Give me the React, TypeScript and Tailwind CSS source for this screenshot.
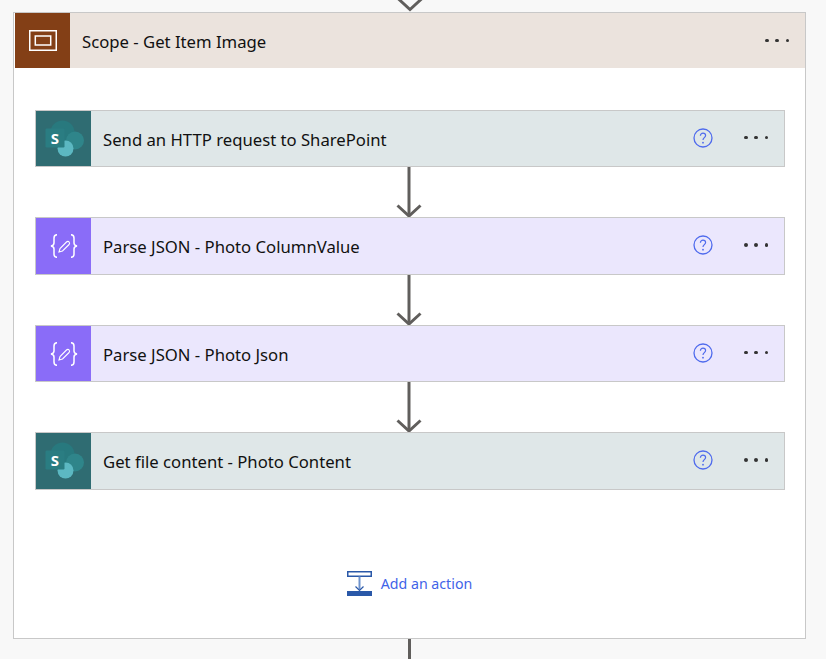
const font = { fontFamily: '"Noto Sans", "Open Sans", sans-serif' };

function Dots() {
  return (
    <div className="flex shrink-0 items-center gap-[6.8px]">
      <span className="h-[3.5px] w-[3.5px] rounded-full bg-[#333]" />
      <span className="h-[3.5px] w-[3.5px] rounded-full bg-[#333]" />
      <span className="h-[3.5px] w-[3.5px] rounded-full bg-[#333]" />
    </div>
  );
}

function Help() {
  return (
    <svg width="20" height="20" viewBox="0 0 20 20" fill="none" className="mb-[2px] shrink-0">
      <circle cx="10" cy="10" r="9" stroke="#4f6bed" strokeWidth="1.3" />
      <path d="M7.400 7.700c0-1.500 1.100-2.500 2.600-2.500s2.600 1 2.600 2.400c0 2-2.600 2.100-2.600 4.300" stroke="#4f6bed" strokeWidth="1.200" />
      <circle cx="10" cy="14.700" r=".9" fill="#4f6bed" />
    </svg>
  );
}

function SharePoint() {
  return (
    <svg width="40" height="40" viewBox="0 0 40 40">
      <circle cx="18.500" cy="13.500" r="12" fill="#28797e" />
      <circle cx="31" cy="21.500" r="9" fill="#2f858a" />
      <circle cx="21.500" cy="29.500" r="8" fill="#5cb8c2" />
      <rect x="1.500" y="9.500" width="19" height="19" rx="1.200" fill="#2a7d82" />
      <text x="11" y="24.500" textAnchor="middle" fontSize="15" fontWeight="700" fill="#fff" style={font}>S</text>
    </svg>
  );
}

function Json() {
  return (
    <svg width="28" height="24" viewBox="0 0 28 24" fill="none" stroke="#fff" strokeWidth="1.500">
      <path d="M7 .7C4.500 .7 4 2 4 4v5c0 2-1 2.600-3 3 2 .4 3 1 3 3v5c0 2 .5 3.300 3 3.300" />
      <path d="M21 .7c2.500 0 3 1.300 3 3.300v5c0 2 1 2.600 3 3-2 .4-3 1-3 3v5c0 2-.5 3.300-3 3.300" />
      <path d="M9 18l1-3.500L16.500 8c.8-.8 2-.8 2.600 0s.6 1.800 0 2.500L12.500 17z" strokeWidth="1.100" />
    </svg>
  );
}

function Arrow() {
  return (
    <svg width="28" height="50" viewBox="0 0 28 50" fill="none" stroke="#605e5c" strokeWidth="3" className="block">
      <path d="M14 0v48" />
      <path d="M2.500 38.500 14 49 25.500 38.500" />
    </svg>
  );
}

function Card({ title, kind, tall }: { title: string; kind: "sp" | "json"; tall?: boolean }) {
  const sp = kind === "sp";
  return (
    <div className={`flex items-center border border-[#c8c8c8] ${tall ? "h-[58px]" : "h-[57px]"} ${sp ? "bg-[#dfe7e8]" : "bg-[#ebe7fd]"}`}>
      <div className={`flex h-full w-[55px] shrink-0 items-center justify-center ${sp ? "bg-[#2f6c72]" : "bg-[#8a6cf8]"}`}>
        {sp ? <SharePoint /> : <Json />}
      </div>
      <div className="ml-3 flex-1 pt-[2px] text-[16.700px] text-[#111]">{title}</div>
      <Help />
      <div className="mb-[2px] ml-[31px] w-[40px]"><Dots /></div>
    </div>
  );
}

function Link() {
  return <div className="flex h-[50px] justify-center pr-[2px]"><Arrow /></div>;
}

export default function App() {
  return (
    <div className="h-[659px] w-[826px] overflow-hidden bg-[#f8f8f8]" style={font}>
      <div className="flex h-[12px] justify-center pr-[7px]">
        <svg width="28" height="12" viewBox="0 0 28 12" fill="none" stroke="#605e5c" strokeWidth="3">
          <path d="M2.500-1 14 9.500 25.500-1" />
        </svg>
      </div>
      <div className="ml-[13px] h-[627px] w-[793px] border border-[#c8c8c8] bg-white">
        <div className="ml-px flex h-[55px] items-center bg-[#ebe3dd]">
          <div className="flex h-full w-[55px] items-center justify-center bg-[#833f16]">
            <svg width="28" height="21" viewBox="0 0 28 21" fill="none" stroke="#fff">
              <rect x=".75" y=".75" width="26.500" height="19.500" strokeWidth="1.500" />
              <rect x="6.300" y="6" width="15.400" height="9" strokeWidth="1.500" />
            </svg>
          </div>
          <div className="ml-3 flex-1 pt-[2px] text-[16.700px] text-[#111]">Scope - Get Item Image</div>
          <div className="w-[40px]"><Dots /></div>
        </div>

        <div className="mx-[21px] mt-[42px] flex w-[750px] flex-col">
          <Card title="Send an HTTP request to SharePoint" kind="sp" />
          <Link />
          <Card title="Parse JSON - Photo ColumnValue" kind="json" tall />
          <Link />
          <Card title="Parse JSON - Photo Json" kind="json" />
          <Link />
          <Card title="Get file content - Photo Content" kind="sp" tall />
        </div>

        <div className="mt-[81px] flex items-center justify-center gap-[8px]">
          <svg width="26" height="26" viewBox="0 0 26 26" fill="none">
            <rect x=".75" y=".750" width="23.500" height="4.500" fill="#fff" stroke="#2a58a8" strokeWidth="1.500" />
            <path d="M12.500 5.500v13" stroke="#6f93cc" strokeWidth="2" />
            <path d="M8.500 15.500l4 4 4-4" stroke="#2a58a8" strokeWidth="1.200" />
            <rect x="0" y="20" width="25" height="5" fill="#2a58a8" />
          </svg>
          <span className="text-[14.200px] text-[#3f63e8]">Add an action</span>
        </div>
      </div>
      <div className="flex justify-center pr-[7px]"><div className="h-[20px] w-[3px] bg-[#605e5c]" /></div>
    </div>
  );
}
